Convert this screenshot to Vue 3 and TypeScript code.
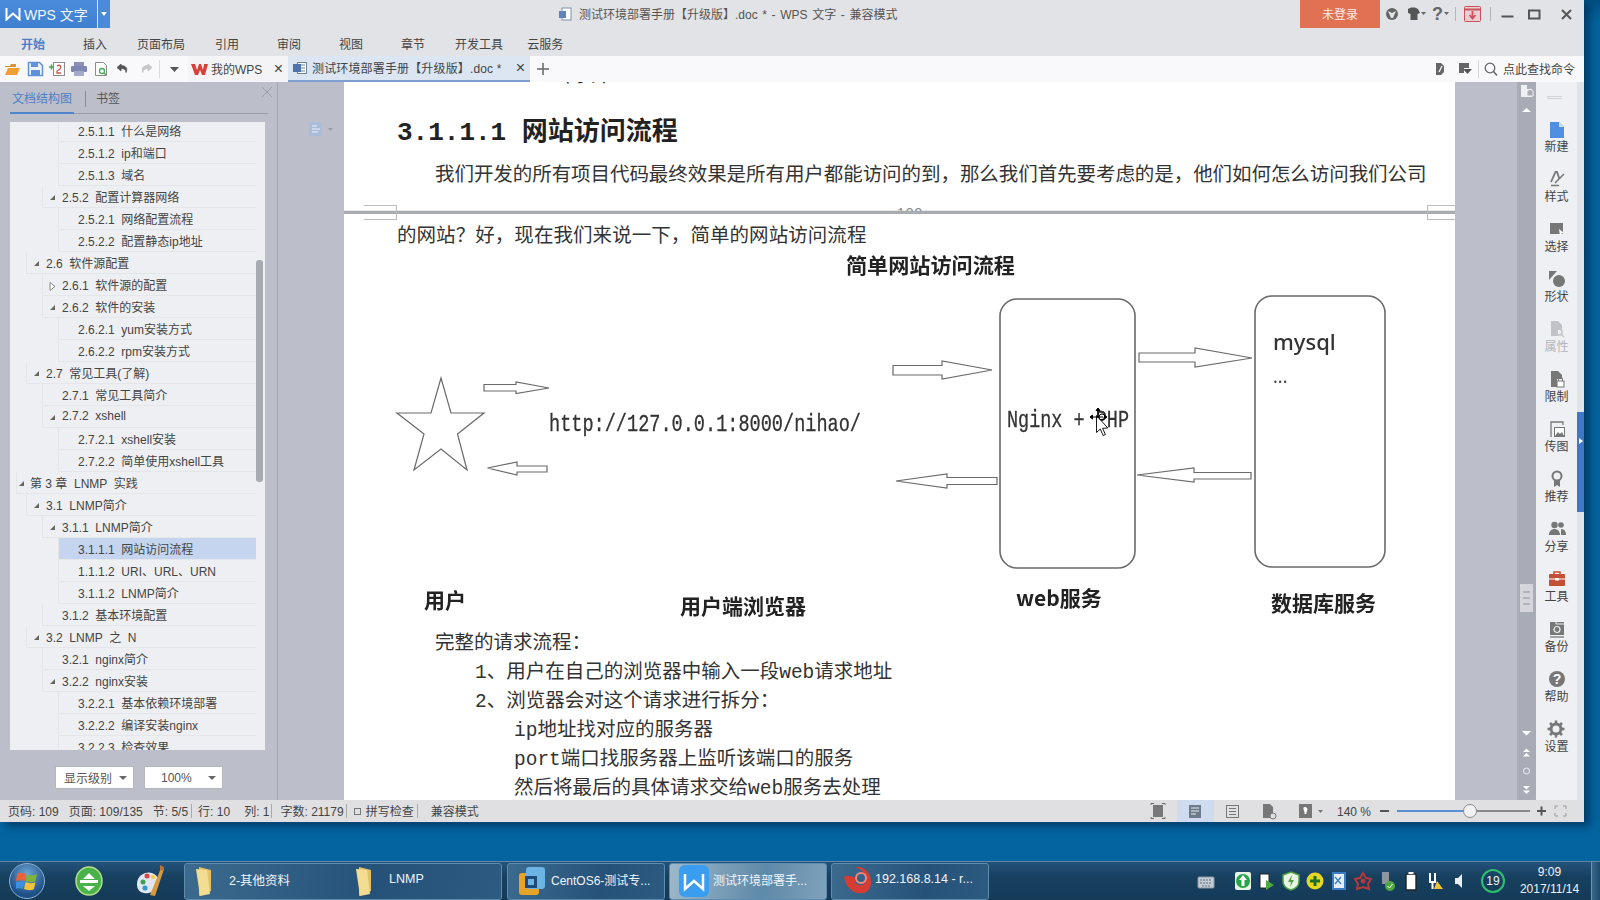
<script setup lang="ts">
interface Row { t: string; lv: number; a?: 'd' | 'r'; sel?: boolean }
const rows: Row[] = [
  { t: '2.5.1.1  什么是网络', lv: 4 },
  { t: '2.5.1.2  ip和端口', lv: 4 },
  { t: '2.5.1.3  域名', lv: 4 },
  { t: '2.5.2  配置计算器网络', lv: 3, a: 'd' },
  { t: '2.5.2.1  网络配置流程', lv: 4 },
  { t: '2.5.2.2  配置静态ip地址', lv: 4 },
  { t: '2.6  软件源配置', lv: 2, a: 'd' },
  { t: '2.6.1  软件源的配置', lv: 3, a: 'r' },
  { t: '2.6.2  软件的安装', lv: 3, a: 'd' },
  { t: '2.6.2.1  yum安装方式', lv: 4 },
  { t: '2.6.2.2  rpm安装方式', lv: 4 },
  { t: '2.7  常见工具(了解)', lv: 2, a: 'd' },
  { t: '2.7.1  常见工具简介', lv: 3 },
  { t: '2.7.2  xshell', lv: 3, a: 'd' },
  { t: '2.7.2.1  xshell安装', lv: 4 },
  { t: '2.7.2.2  简单使用xshell工具', lv: 4 },
  { t: '第 3 章  LNMP  实践', lv: 1, a: 'd' },
  { t: '3.1  LNMP简介', lv: 2, a: 'd' },
  { t: '3.1.1  LNMP简介', lv: 3, a: 'd' },
  { t: '3.1.1.1  网站访问流程', lv: 4, sel: true },
  { t: '1.1.1.2  URI、URL、URN', lv: 4 },
  { t: '3.1.1.2  LNMP简介', lv: 4 },
  { t: '3.1.2  基本环境配置', lv: 3 },
  { t: '3.2  LNMP  之  N', lv: 2, a: 'd' },
  { t: '3.2.1  nginx简介', lv: 3 },
  { t: '3.2.2  nginx安装', lv: 3, a: 'd' },
  { t: '3.2.2.1  基本依赖环境部署', lv: 4 },
  { t: '3.2.2.2  编译安装nginx', lv: 4 },
  { t: '3.2.2.3  检查效果', lv: 4 },
]
const ribbon = [
  { t: '开始', c: 'first' }, { t: '插入', c: '' }, { t: '页面布局', c: 'tight' }, { t: '引用', c: 'tight' },
  { t: '审阅', c: '' }, { t: '视图', c: '' }, { t: '章节', c: '' }, { t: '开发工具', c: 'tight' }, { t: '云服务', c: 'tighter' },
]
const tools = ['新建', '样式', '选择', '形状', '属性', '限制', '传图', '推荐', '分享', '工具', '备份', '帮助', '设置']
const trayBoxes = 10
</script>

<template>
  <div class="screen">
    <div class="window">
      <header class="titlebar">
        <div class="logo">
          <svg width="16" height="14" viewBox="0 0 16 14"><path d="M1.500 1v11.500L8 6.500l6.500 6V1" fill="none" stroke="#fff" stroke-width="2" /></svg>
          <span>WPS 文字</span>
        </div>
        <div class="logo-drop"><i></i></div>
        <svg class="title-ico" width="14" height="14" viewBox="0 0 14 14"><rect x="4" y="1" width="9" height="12" fill="#fff" stroke="#7f8fa8" /><rect x="1" y="4" width="7" height="7" fill="#5f83b8" /></svg>
        <div class="title-text">测试环境部署手册【升级版】.doc * - WPS 文字 - 兼容模式</div>
        <div class="login">未登录</div>
        <svg class="win-ctl" width="204" height="28" viewBox="1380 0 204 28">
          <circle cx="1392" cy="14" r="6" fill="#666" />
          <path d="M1388 11l4 2 4-2-3 7h-2z" fill="#e2e3e6" />
          <path d="M1408 9l3-1.500h4l3 1.500 2 4-2.500 1V20h-7v-6l-2.500-1z" fill="#555" />
          <path d="M1421 12h5l-2.500 3zM1444 12h5l-2.500 3z" fill="#666" />
          <text x="1432" y="19.500" class="q">?</text>
          <path d="M1455.500 7v14M1490.500 7v14" stroke="#b5b6ba" />
          <rect x="1464.500" y="6.500" width="16" height="15" rx="1" fill="#e9cfd2" stroke="#c9505f" />
          <path d="M1464 9.500h17" stroke="#c9505f" stroke-width="2" />
          <path d="M1472.500 11v7M1469.500 15l3 3.500 3-3.500" fill="none" stroke="#c9505f" stroke-width="1.800" />
          <path d="M1501.500 16.500h12" stroke="#555" stroke-width="2" />
          <rect x="1529" y="10.500" width="10.500" height="8" fill="none" stroke="#555" stroke-width="2" />
          <path d="M1562 10l9 9M1571 10l-9 9" stroke="#555" stroke-width="2" />
        </svg>
      </header>

      <nav class="ribbon">
        <span v-for="r in ribbon" :key="r.t" class="rtab" :class="r.c">{{ r.t }}</span>
      </nav>

      <div class="toolbar">
        <svg width="188" height="26" viewBox="0 0 188 26">
          <path d="M5 10h5l1-2h5v3H5z" fill="#d9932d" /><path d="M5 19l3-7h12l-3 7z" fill="#ee9f35" />
          <path d="M28.500 6.500h11l3 3v10h-14z" fill="#eef3fb" stroke="#5d92dc" stroke-width="1.500" /><rect x="31" y="7" width="7" height="4" fill="#5d92dc" /><rect x="31" y="14" width="9" height="5" fill="#5d92dc" />
          <rect x="53.500" y="6.500" width="11" height="13" fill="#fff" stroke="#8b8b8b" /><path d="M49 11h5M51.500 8.500v5" stroke="#4aa85a" stroke-width="1.600" /><path d="M57 10c3-2 5 1 3 3l-3 2v2h4" fill="none" stroke="#c9584f" stroke-width="1.300" />
          <rect x="74" y="6" width="10" height="4" fill="#8d90b8" /><rect x="71" y="10" width="16" height="6" rx="1" fill="#8086b4" /><rect x="74" y="15" width="10" height="5" fill="#a5a9cb" />
          <path d="M95.500 6.500h8l3 3v10h-11z" fill="#fff" stroke="#8b8b8b" /><circle cx="102" cy="15" r="2.500" fill="none" stroke="#4aa85a" stroke-width="1.300" /><path d="M104 17l2 2" stroke="#4aa85a" stroke-width="1.300" />
          <path d="M121 8l-4 3.500 4 3.500v-2.500c3 0 5 1 5 4 2-4 0-7-5-7z" fill="#555" stroke="#555" stroke-width=".8" />
          <path d="M148 8l4 3.500-4 3.500v-2.500c-3 0-5 1-5 4-2-4 0-7 5-7z" fill="#c4c5c8" stroke="#c4c5c8" stroke-width=".8" />
          <path d="M159.500 4v18" stroke="#dcdcdf" />
          <path d="M170 11h9l-4.500 5z" fill="#555" />
        </svg>
        <div class="dtab">
          <svg width="17" height="13" viewBox="0 0 17 13"><path d="M0 1h4l2 6 2-6h2l2 6 1-6h4l-3 11h-3L9 7l-2 5H4z" fill="#d8413a" /></svg>
          <span>我的WPS</span><b>×</b>
        </div>
        <div class="dtab active">
          <svg width="14" height="14" viewBox="0 0 14 14"><rect x="4.500" y="1.500" width="9" height="11" fill="#fff" stroke="#6c7f99" /><path d="M8 4h4M8 7h4M8 10h4" stroke="#6c7f99" /><rect x="0" y="3" width="8" height="8" fill="#4b74ad" /></svg>
          <span>测试环境部署手册【升级版】.doc *</span><b>×</b>
        </div>
        <svg class="plus" width="14" height="14" viewBox="0 0 14 14"><path d="M7 1v12M1 7h12" stroke="#666" stroke-width="1.500" /></svg>
        <div class="tool-right">
          <svg width="74" height="26" viewBox="1430 0 74 26">
            <path d="M1437 7h5l3 3v6l-3 3h-5z" fill="#666" /><path d="M1440 16l3-6" stroke="#f9f9fb" stroke-width="1.300" />
            <path d="M1460 7h10v5h-5v5h-5z" fill="#666" /><path d="M1464 13h9l-4.500 5z" fill="#555" />
            <path d="M1479.500 4v18" stroke="#d4d4d8" />
            <circle cx="1491" cy="12" r="4.800" fill="none" stroke="#666" stroke-width="1.300" /><path d="M1494.500 15.500l3.500 4" stroke="#666" stroke-width="1.500" />
          </svg>
          <span>点此查找命令</span>
        </div>
      </div>

      <main class="main">
        <aside class="sidebar">
          <div class="side-tabs">
            <span class="stab on">文档结构图</span><i class="ssep"></i><span class="stab">书签</span>
          </div>
          <svg class="side-x" width="10" height="10" viewBox="0 0 10 10"><path d="M0 0l10 10M10 0L0 10" stroke="#9a9da8" /></svg>
          <div class="tree">
            <div class="rows">
              <div v-for="r in rows" :key="r.t" class="row" :class="['lv' + r.lv, { sel: r.sel }]">
                <svg v-if="r.a === 'd'" class="arr" width="7" height="7" viewBox="0 0 7 7"><path d="M6 1v5H1z" fill="#666" /></svg>
                <svg v-else-if="r.a === 'r'" class="arr" width="7" height="9" viewBox="0 0 7 9"><path d="M1 .5l5 4-5 4z" fill="#fff" stroke="#888" /></svg>
                <span>{{ r.t }}</span>
              </div>
            </div>
            <div class="track"><div class="thumb"></div></div>
          </div>
          <div class="selects">
            <div class="sel-box"><span>显示级别</span><i></i></div>
            <div class="sel-box num"><span>100%</span><i></i></div>
          </div>
        </aside>

        <div class="gutter">
          <svg width="24" height="14" viewBox="0 0 24 14"><rect x="0" y="0" width="13" height="14" fill="#a9bcd9" /><path d="M3 4h5M3 7h8M3 10h6" stroke="#eef2f8" /><path d="M19 6h5l-2.500 3z" fill="#9a9da8" /></svg>
        </div>

        <section class="doc">
          <div class="page-a">
            <div class="frag">简介</div>
            <h3 class="h"><span class="hn">3.1.1.1 </span>网站访问流程</h3>
            <p class="line ind first-line">我们开发的所有项目代码最终效果是所有用户都能访问的到，那么我们首先要考虑的是，他们如何怎么访问我们公司</p>
            <span class="pno">109</span>
          </div>
          <div class="break"></div>
          <i class="mark left"></i><i class="mark right"></i>
          <div class="page-b">
            <p class="line second-line">的网站？好，现在我们来说一下，简单的网站访问流程</p>
            <svg class="diagram" width="1111" height="378" viewBox="344 247 1111 378">
              <g fill="#fff" stroke="#6a6a6a" stroke-width="1.200" transform="translate(0 -1)">
                <path d="M441 378L451 413H484L457.500 434L467 470L441 449L414 470L424 434L397 413H431Z" />
                <rect x="1000" y="299" width="135" height="269" rx="17" stroke-width="1.600" />
                <rect x="1255" y="296" width="130" height="271" rx="17" stroke-width="1.600" />
                <path d="M484 384.500H516V382L549 388L516 393.500V391H484Z" />
                <path d="M487.500 468L517 462V466H547V472H517V475Z" />
                <path d="M893 365.500H942V361L992 370L942 379V375H893Z" />
                <path d="M896 481L947 474V477.500H997V484.500H947V488Z" />
                <path d="M1139 353H1195V348L1252 358L1195 367V362H1139Z" />
                <path d="M1137 475L1194 468V472.500H1251V479H1194V482Z" />
              </g>
              <g class="shot">
                <text x="846" y="272" class="cap" textLength="169" lengthAdjust="spacingAndGlyphs">简单网站访问流程</text>
                <text x="549" y="430" class="mono" textLength="312" lengthAdjust="spacingAndGlyphs">http://127.0.0.1:8000/nihao/</text>
                <text x="1007" y="426" class="mono" textLength="122" lengthAdjust="spacingAndGlyphs">Nginx + PHP</text>
                <text x="1273" y="349" class="my">mysql</text>
                <text x="1273" y="382" class="dots">...</text>
                <text x="424" y="607" class="cap">用户</text>
                <text x="680" y="613" class="cap">用户端浏览器</text>
                <text x="1016" y="605" class="cap">web服务</text>
                <text x="1271" y="610" class="cap">数据库服务</text>
              </g>
              <path d="M1096.500 414.500l0 17 3.800-3.500 2.800 6.500 2.300-1-2.800-6.200 5.200-.3z" fill="#fff" stroke="#000" stroke-width=".9" />
              <path d="M1098 407v10M1090 416h13M1098 407l-2 2.500h4zM1090 416l2.500-2v4zM1107 416l-2.500-2v4z" stroke="#000" fill="#000" stroke-width="1" />
              <circle cx="1102" cy="416" r="3" fill="none" stroke="#000" />
            </svg>
            <p class="line ind">完整的请求流程：</p>
            <p class="line ind2"><span class="la">1</span>、用户在自己的浏览器中输入一段<span class="la">web</span>请求地址</p>
            <p class="line ind2"><span class="la">2</span>、浏览器会对这个请求进行拆分：</p>
            <p class="line ind3"><span class="la">ip</span>地址找对应的服务器</p>
            <p class="line ind3"><span class="la">port</span>端口找服务器上监听该端口的服务</p>
            <p class="line ind3">然后将最后的具体请求交给<span class="la">web</span>服务去处理</p>
          </div>
        </section>

        <div class="gutter-r"></div>

        <svg class="vscroll" width="19" height="718" viewBox="1517 82 19 718">
          <rect x="1517" y="82" width="19" height="718" fill="#a9abb7" />
          <path d="M1521 85h6v4h5v8h-11z" fill="#eef0f3" /><path d="M1527 91l3-2 3 2v5h-6z" fill="#a9abb7" stroke="#eef0f3" />
          <path d="M1522 112l4.500-4 4.500 4z" fill="#fff" />
          <rect x="1520" y="584" width="13" height="28" fill="#d5d6dc" />
          <path d="M1523 592h7M1523 598h7M1523 604h7" stroke="#8d8f9a" />
          <path d="M1522 731h9l-4.500 4.500z" fill="#fff" />
          <path d="M1523 752l3.500-3.500 3.500 3.500zM1523 756.500l3.500-3.500 3.500 3.500z" fill="#fff" />
          <circle cx="1526.500" cy="771" r="3" fill="none" stroke="#eef0f3" />
          <path d="M1523 786l3.500 3.500 3.500-3.500zM1523 790.500l3.500 3.500 3.500-3.500z" fill="#fff" />
        </svg>

        <aside class="tools">
          <i class="grip"></i>
          <div v-for="(t, i) in tools" :key="t" class="tool" :class="{ dim: t === '属性' }">
            <svg width="20" height="20" viewBox="0 0 20 20">
              <path v-if="i === 0" d="M3 3h9l5 5v11H3z" fill="#4f8ee0" />
              <path v-if="i === 0" d="M12 3v5h5" fill="#cfe0f6" />
              <g v-if="i === 1"><path d="M4 13L8.500 3h1.500l2.500 7" fill="none" stroke="#777" stroke-width="1.800" /><path d="M17 5L8 14M4 16.500h8" stroke="#777" stroke-width="1.500" /></g>
              <g v-if="i === 2"><rect x="3" y="4" width="13" height="11" fill="#777" /><path d="M12 10l5 4-2.500.5L13 17z" fill="#fff" /></g>
              <g v-if="i === 3"><path d="M2 2h8L2 11z" fill="#777" /><circle cx="12" cy="12" r="6" fill="#777" /></g>
              <g v-if="i === 4"><path d="M4 2h7l4 4v5h-4v6H4z" fill="#c2c3c8" /><circle cx="12" cy="13" r="3" fill="none" stroke="#c2c3c8" stroke-width="1.500" /><path d="M14 15l3 3" stroke="#c2c3c8" stroke-width="1.500" /></g>
              <g v-if="i === 5"><path d="M4 2h7l4 4v4h-5v8H4z" fill="#777" /><rect x="10" y="12" width="7" height="6" fill="#fff" stroke="#777" /><path d="M11.500 12V10a2 2 0 0 1 4 0v2" fill="none" stroke="#777" /></g>
              <g v-if="i === 6"><path d="M4 18V3h12v3" fill="none" stroke="#777" stroke-width="1.300" /><rect x="7.500" y="8.500" width="10" height="9" fill="#fff" stroke="#777" /><path d="M8 17l3-4 2 2 2-2 2 4z" fill="#777" /></g>
              <g v-if="i === 7"><circle cx="10" cy="7" r="4.500" fill="none" stroke="#777" stroke-width="2" /><path d="M7 11v7l3-2 3 2v-7" fill="#777" /></g>
              <g v-if="i === 8"><circle cx="7.500" cy="6" r="3.200" fill="#777" /><circle cx="14" cy="6" r="2.800" fill="#777" /><path d="M2 16c0-8 11-8 11 0zM14 10c4 0 5 3 5 6h-5z" fill="#777" /></g>
              <g v-if="i === 9"><path d="M7 5V3h6v2" fill="none" stroke="#c35036" stroke-width="1.500" /><rect x="2" y="5" width="16" height="12" rx="1" fill="#c35036" /><path d="M2 10h16" stroke="#fff" /><rect x="8" y="9" width="4" height="2.500" fill="#fff" /></g>
              <g v-if="i === 10"><path d="M3 3h14v13H3z" fill="#777" /><path d="M9 3v2h8" fill="none" stroke="#eff0f3" /><path d="M3 18h14" stroke="#777" stroke-width="1.300" /><circle cx="10" cy="10.500" r="3" fill="none" stroke="#eff0f3" stroke-width="1.200" /></g>
              <g v-if="i === 11"><circle cx="10" cy="10" r="8" fill="#777" /><text x="10" y="15" class="qh">?</text></g>
              <g v-if="i === 12"><circle cx="9" cy="10" r="5" fill="none" stroke="#777" stroke-width="3" /><path d="M9 1.500v3M9 15.500v3M.5 10h3M14.500 10h3M3 4l2 2M13 14l2 2M15 4l-2 2M5 14l-2 2" stroke="#777" stroke-width="2.500" /></g>
            </svg>
            <span>{{ t }}</span>
          </div>
        </aside>

        <div class="edge">
          <div class="edge-tab"><i></i></div>
        </div>
      </main>

      <footer class="status">
        <span>页码: 109</span><span>页面: 109/135</span><span class="m">节: 5/5</span><i class="bar"></i>
        <span class="n">行: 10</span><span class="n2">列: 1</span><i class="bar"></i>
        <span class="n5">字数: 21179</span><i class="bar"></i><i class="check"></i>
        <span class="n3">拼写检查</span><i class="bar"></i><span class="n4">兼容模式</span>
        <svg class="st-right" width="444" height="22" viewBox="1140 0 444 22">
          <path d="M1151 5v-1.500h3M1165 5v-1.500h-3M1151 17v1.500h3M1165 17v1.500h-3" fill="none" stroke="#666" /><rect x="1153" y="5" width="10" height="12" fill="#777" />
          <rect x="1177" y="0" width="37" height="22" fill="#cfdcef" />
          <rect x="1189" y="5" width="12" height="13" fill="#6f7b88" /><path d="M1191 8h8M1191 11h8M1191 14h5" stroke="#e7edf5" />
          <rect x="1226.500" y="5.500" width="12" height="12" fill="none" stroke="#777" /><path d="M1229 8.500h7M1229 11.500h7M1229 14.500h7" stroke="#777" />
          <path d="M1263 4h7l3 3v11h-10z" fill="#777" /><circle cx="1273" cy="16" r="3" fill="#e0e0e3" stroke="#777" />
          <rect x="1299" y="4" width="13" height="14" fill="#777" /><path d="M1303.500 7.500a2.500 2.500 0 0 1 4 2l-1 2.500v2h-2v-2l-1-2.500z" fill="#fff" />
          <path d="M1318 10h5l-2.500 3z" fill="#777" />
          <text x="1337" y="15.500" class="st-txt">140 %</text>
          <path d="M1380 11h9" stroke="#555" stroke-width="2" />
          <path d="M1397 11h68" stroke="#5b8fd4" stroke-width="2" />
          <path d="M1477 11h53" stroke="#8a8a8a" stroke-width="2" />
          <circle cx="1470" cy="11" r="6.500" fill="#f2f2f4" stroke="#8a8a8a" />
          <path d="M1537 11h9M1541.500 6.500v9" stroke="#555" stroke-width="2" />
          <path d="M1555 9V6h3M1563 6h3v3M1555 13v3h3M1563 16h3v-3" fill="none" stroke="#999" />
        </svg>
      </footer>
    </div>

    <div class="taskbar">
      <div class="orb">
        <svg width="22" height="22" viewBox="0 0 22 22">
          <path d="M1 4c3-2 6-1 9 0l-1.500 7c-3-1-6-1-8.500 0z" fill="#e8633a" /><path d="M11 4c3 1 6 2 10 0l-1.500 7c-3 2-7 1-10 0z" fill="#7cb43c" />
          <path d="M0 12c3-1 5-1 8.500 0L7 19c-3-1-5-1-8 0z" fill="#3d8fe0" /><path d="M9.500 12c3 1 7 2 10 0L18 19c-3 2-7 1-10 0z" fill="#f2c23c" />
        </svg>
      </div>
      <svg class="ie" width="28" height="32" viewBox="0 0 28 32">
        <ellipse cx="14" cy="16" rx="13" ry="14" fill="#49b24a" /><ellipse cx="14" cy="16" rx="13" ry="14" fill="none" stroke="#b5e08a" stroke-width="1.500" />
        <path d="M5 15h18v3H5z" fill="#fff" /><path d="M14 8l6 6H8zM14 26l-6-5h12z" fill="#fff" />
      </svg>
      <svg class="paint" width="30" height="34" viewBox="0 0 30 34">
        <path d="M2 20c0-9 9-13 15-11 6 2 7 7 5 12-2 7-8 9-13 8-5-1-7-4-7-9z" fill="#dfe6ee" />
        <circle cx="8" cy="18" r="2.500" fill="#3f9f4f" /><circle cx="12" cy="12" r="2.500" fill="#d44" /><circle cx="10" cy="24" r="2.500" fill="#39c" /><circle cx="18" cy="13" r="2" fill="#fc3" />
        <path d="M15 31L26 4l3 1-9 27z" fill="#d99a3d" /><path d="M25 1l4 2-1 4-3-1z" fill="#b5763a" />
      </svg>
      <div class="tb group">
        <div class="tb-item first">
          <svg width="20" height="32" viewBox="0 0 20 32"><path d="M4 2l12 3v21L4 31z" fill="#e4c165" /><path d="M1 4l11 1 3 24-10 2z" fill="#f3dd92" /></svg>
          <span>2-其他资料</span>
        </div>
        <div class="tb-item second">
          <svg width="20" height="32" viewBox="0 0 20 32"><path d="M4 2l12 3v21L4 31z" fill="#e4c165" /><path d="M1 4l11 1 3 24-10 2z" fill="#f3dd92" /></svg>
          <span>LNMP</span>
        </div>
      </div>
      <div class="tb single vm">
        <svg width="28" height="32" viewBox="0 0 28 32">
          <rect x="1" y="8" width="20" height="22" rx="3" fill="#e7a427" /><rect x="8" y="2" width="19" height="22" rx="3" fill="#6cb4e4" />
          <rect x="7" y="11" width="12" height="12" fill="#1e4a76" /><rect x="10" y="14" width="6" height="6" fill="#6cb4e4" />
        </svg>
        <span>CentOS6-测试专...</span>
      </div>
      <div class="tb single active">
        <svg width="30" height="32" viewBox="0 0 30 32"><rect x="0" y="0" width="30" height="32" rx="6" fill="#3a9df0" /><path d="M6 9v15l9-8 9 8V9" fill="none" stroke="#fff" stroke-width="2.500" /></svg>
        <span>测试环境部署手...</span>
      </div>
      <div class="tb single xs">
        <svg width="32" height="32" viewBox="0 0 32 32">
          <path d="M3 12c2 11 10 18 20 16 6-2 9-9 6-17-3-7-10-11-15-8 5 0 10 4 11 10 0 5-3 8-7 7-4-1-5-5-3-8-5 0-8-3-12 0z" fill="#d53c33" />
          <circle cx="20" cy="13" r="5" fill="none" stroke="#f08a7f" stroke-width="2" />
        </svg>
        <span>192.168.8.14 - r...</span>
      </div>
      <div class="tray">
        <svg class="kb" width="24" height="22" viewBox="0 0 24 22"><rect x="4" y="7" width="16" height="11" rx="1" fill="#c4ccd4" stroke="#8a98a6" /><path d="M6 10h12M6 13h12M8 16h8" stroke="#5f6e7d" stroke-dasharray="2 1" /></svg>
        <div v-for="n in trayBoxes" :key="n" class="ti">
          <svg width="22" height="22" viewBox="0 0 22 22">
            <g v-if="n === 1"><rect x="3" y="2" width="16" height="18" rx="2" fill="#e9f3ea" /><circle cx="11" cy="11" r="7" fill="#27a348" /><path d="M11 5l4 5h-2.500v6h-3v-6H7z" fill="#fff" /></g>
            <g v-if="n === 2"><rect x="4" y="4" width="9" height="14" fill="#fff" stroke="#222" /><path d="M10 10l8 5-8 5z" fill="#4fa83e" /></g>
            <g v-if="n === 3"><path d="M11 2l8 3v6c0 5-4 8-8 9-4-1-8-4-8-9V5z" fill="#e8f3e4" stroke="#4f9f43" stroke-width="1.500" /><path d="M12 5l-4 7h3l-1 5 4-7h-3z" fill="#4f9f43" /></g>
            <g v-if="n === 4"><circle cx="11" cy="11" r="8.500" fill="#e6d822" /><path d="M11 6v10M6 11h10" stroke="#1d6d2b" stroke-width="3" /></g>
            <g v-if="n === 5"><rect x="4" y="2" width="14" height="18" fill="#3a7dc4" /><rect x="6" y="4" width="10" height="14" fill="#e5eef7" /><path d="M7 7l6 7M13 7l-6 7" stroke="#3a7dc4" stroke-width="1.300" /></g>
            <g v-if="n === 6"><path d="M11 3l3 5 5 1-3 5 1 5-6-2-6 2 1-5-3-5 5-1z" fill="none" stroke="#b33a3a" stroke-width="2" /><circle cx="11" cy="11" r="2.500" fill="#b33a3a" /></g>
            <g v-if="n === 7"><rect x="6" y="2" width="7" height="12" fill="#8d96a0" /><circle cx="14" cy="16" r="5" fill="#4fa83e" /><path d="M11.500 16l2 2 3-4" stroke="#fff" fill="none" /></g>
            <g v-if="n === 8"><rect x="6" y="4" width="10" height="16" rx="1" fill="#fff" stroke="#222" stroke-width="1.400" /><rect x="8.500" y="2" width="5" height="2" fill="#fff" /></g>
            <g v-if="n === 9"><path d="M6 3v9h5V3M8.500 12v7" stroke="#fff" fill="none" stroke-width="2" /><path d="M13 11l6 8h-9z" fill="#f2c23c" /></g>
            <g v-if="n === 10"><path d="M7 8h3l4-4v14l-4-4H7z" fill="#e8edf2" /></g>
          </svg>
        </div>
        <div class="net">19</div>
        <div class="clock"><div>9:09</div><div>2017/11/14</div></div>
        <div class="show"></div>
      </div>
    </div>
  </div>
</template>

<style>
html, body { margin: 0; padding: 0; background: #005f9c; }
</style>

<style scoped>
* { box-sizing: border-box; }
.screen {
  width: 1600px; height: 900px; overflow: hidden; display: flex; flex-direction: column;
  background: linear-gradient(#014f82 0, #04649f 22px, #04649f 100%);
  font-family: "Liberation Sans", "Noto Sans CJK SC", sans-serif; font-size: 12px; color: #444;
}
.window { width: 1584px; height: 822px; flex: none; display: flex; flex-direction: column; background: #e2e3e6; box-shadow: 6px 4px 8px rgba(0, 30, 60, .55); position: relative; }
.titlebar { height: 28px; flex: none; display: flex; align-items: center; }
.logo { width: 97px; height: 28px; background: linear-gradient(#4b8cdc, #3f7fcf); color: #f2f6fc; display: flex; align-items: center; padding-left: 5px; gap: 3px; font-size: 14px; }
.logo-drop { width: 12px; height: 28px; margin-left: 1px; background: #4a8ad8; display: flex; align-items: center; justify-content: center; }
.logo-drop i { border: 3px solid transparent; border-top: 4px solid #fff; border-bottom: 0; }
.title-ico { margin-left: 448px; }
.title-text { margin-left: 7px; color: #555; white-space: nowrap; word-spacing: 1.300px; padding-bottom: 2px; }
.login { margin-left: auto; width: 80px; height: 28px; background: #e07153; color: #fdeee8; display: flex; align-items: center; justify-content: center; padding-bottom: 2px; }
.q { font: bold 18px "Liberation Sans", sans-serif; fill: #666; }
.ribbon { height: 28px; flex: none; display: flex; align-items: center; padding-left: 21px; padding-top: 2px; color: #444; }
.rtab { margin-left: 38px; white-space: nowrap; }
.rtab.first { margin-left: 0; color: #4d7fc6; font-weight: bold; }
.rtab.tight { margin-left: 30px; }
.rtab.tighter { margin-left: 24px; }
.toolbar { height: 26px; flex: none; display: flex; align-items: center; background: #f9f9fb; }
.dtab { height: 26px; display: flex; align-items: center; white-space: nowrap; }
.dtab span { padding-bottom: 2px; }
.dtab:not(.active) { width: 100px; background: #f4f4f6; padding-left: 3px; gap: 3px; }
.dtab.active { width: 242px; background: #dce6f3; border-bottom: 2px solid #7f9fd0; padding-left: 5px; gap: 5px; }
.dtab.active span { letter-spacing: .15px; }
.dtab b { font-weight: normal; font-size: 16px; color: #444; margin-left: auto; margin-right: 5px; }
.plus { margin-left: 6px; }
.tool-right { margin-left: auto; display: flex; align-items: center; padding-right: 9px; }
.tool-right span { padding-bottom: 2px; }
.main { height: 718px; flex: none; display: flex; background: #bcbfca; overflow: hidden; }
.sidebar { width: 278px; flex: none; border-right: 1px solid #a2a5b0; position: relative; display: flex; flex-direction: column; padding-left: 10px; }
.side-tabs { width: 258px; height: 32px; flex: none; display: flex; align-items: flex-start; border-bottom: 1px solid #9a9da8; padding-top: 8px; position: relative; }
.stab { color: #555; line-height: 18px; }
.stab.on { color: #4d7fc6; width: 64px; padding-left: 2px; height: 24px; border-bottom: 2px solid #4d84cc; margin-bottom: -1px; }
.ssep { width: 1px; height: 16px; background: #8a8d98; margin: 1px 10px 0 11px; }
.side-x { position: absolute; left: 262px; top: 5px; }
.tree { width: 255px; height: 628px; margin-top: 8px; flex: none; background: #eeeff2; display: flex; overflow: hidden; }
.rows { width: 246px; flex: none; margin-top: -2px; }
.row { height: 22px; display: flex; align-items: center; border-bottom: 1px solid #e5e6e9; border-left: 1px solid #e5e6e9; white-space: pre; color: #444; position: relative; padding-bottom: 1px; }
.lv1 { margin-left: 6px; padding-left: 13px; }
.lv2 { margin-left: 16px; padding-left: 19px; }
.lv3 { margin-left: 32px; padding-left: 19px; }
.lv4 { margin-left: 48px; padding-left: 19px; }
.row.sel { background: #c5d5ef; }
.arr { position: absolute; left: 6px; top: 8px; }
.lv1 .arr { left: 1px; }
.track { width: 9px; flex: none; padding: 138px 0 0 0; }
.thumb { width: 7px; height: 222px; background: #a9abb3; border-radius: 3px; }
.selects { display: flex; gap: 10px; padding-left: 45px; margin-top: 16px; }
.sel-box { width: 79px; height: 23px; background: #fff; border: 1px solid #b5b7c0; display: flex; align-items: center; padding: 0 6px 0 8px; color: #555; justify-content: space-between; }
.sel-box.num { padding-left: 16px; }
.sel-box i { border: 4px solid transparent; border-top: 4px solid #666; border-bottom: 0; }
.gutter { width: 66px; flex: none; padding: 40px 0 0 31px; }
.doc { width: 1111px; flex: none; background: #fff; position: relative; overflow: hidden; }
.page-a { height: 129px; padding-left: 53px; position: relative; overflow: hidden; }
.frag { font-size: 19.500px; line-height: 20px; margin: -17px 0 0 168px; color: #222; height: 20px; letter-spacing: 6px; }
.h { margin: 0; height: 61px; padding-top: 27px; font-size: 26px; line-height: 34px; font-weight: bold; color: #222; white-space: pre; font-family: "Noto Sans CJK SC", sans-serif; }
.hn { font-family: "Liberation Mono", monospace; white-space: pre; }
.line { margin: 0; font-size: 19.500px; line-height: 29px; height: 29px; color: #333; white-space: nowrap; font-family: "Noto Sans CJK SC", sans-serif; }
.first-line { letter-spacing: -.06px; }
.second-line { letter-spacing: .06px; }
.la { font-family: "Liberation Mono", monospace; }
.ind { margin-left: 38px; margin-top: 12px; }
.page-b .ind { margin-left: 91px; margin-top: 0; }
.ind2 { margin-left: 131px; }
.ind3 { margin-left: 170px; }
.pno { position: absolute; left: 553px; top: 123px; font-size: 14px; color: #888; letter-spacing: 1px; }
.break { height: 3px; background: #a9abb3; box-shadow: 0 -1px 1px rgba(0, 0, 0, .1); }
.mark { position: absolute; top: 123px; height: 15px; border: 1px solid #bbb; }
.mark.left { left: 20px; width: 33px; border-left: 0; }
.mark.right { right: 0; width: 28px; border-right: 0; }
.page-b { padding-top: 5px; }
.page-b > .line:first-child { margin-left: 53px; }
.diagram { display: block; }
.shot { filter: blur(.35px); }
.cap { font: bold 21px "Noto Sans CJK SC", sans-serif; fill: #222; }
.mono { font: 24px "Liberation Mono", monospace; fill: #333; stroke: #333; stroke-width: .3px; }
.my { font: 500 22px "Noto Sans", sans-serif; fill: #333; }
.dots { font: 18px "Noto Sans", sans-serif; fill: #444; }
.gutter-r { width: 62px; flex: none; }
.vscroll { flex: none; display: block; }
.tools { width: 41px; flex: none; background: #eff0f3; padding-top: 37px; position: relative; }
.grip { position: absolute; left: 11px; top: 14px; width: 15px; height: 3px; border-top: 1px solid #d2d3d8; border-bottom: 1px solid #d2d3d8; }
.tool { height: 50px; display: flex; flex-direction: column; align-items: center; }
.tool svg { display: block; flex: none; }
.tool span { line-height: 17px; color: #444; }
.tool.dim span { color: #b3b4b9; }
.qh { font: bold 14px "Liberation Sans", sans-serif; fill: #fff; text-anchor: middle; }
.edge { width: 7px; flex: none; background: #e2e3e6; padding-top: 330px; }
.edge-tab { height: 100px; background: #3f78c8; padding-top: 26px; }
.edge-tab i { display: block; border: 3px solid transparent; border-left: 4px solid #fff; border-right: 0; width: 0; margin-left: 2px; }
.status { height: 22px; flex: none; display: flex; align-items: center; padding-left: 8px; background: #e0e0e3; color: #444; position: relative; white-space: nowrap; }
.status span { margin-right: 10px; padding-bottom: 1px; }
.status .m { margin-right: 3px; }
.status .n { margin-left: 3px; margin-right: 14px; }
.status .n2 { margin-right: 2px; }
.status .n5 { margin-left: 5px; margin-right: 2px; }
.status .n3 { margin-right: 3px; }
.status .n4 { margin-left: 10px; }
.bar { width: 1px; height: 14px; background: #aaa; margin-right: 3px; }
.check { width: 7px; height: 7px; border: 1px solid #777; margin: 0 5px 0 4px; }
.st-right { position: absolute; left: 1140px; top: 0; }
.st-txt { font: 12px "Liberation Sans", sans-serif; fill: #444; }
.taskbar { margin-top: 39px; height: 39px; flex: none; display: flex; align-items: center; background: linear-gradient(#23527a, #17405f 40%, #143a58); border-top: 1px solid #5c87a8; padding-left: 9px; color: #f0f4f8; font-size: 12.500px; white-space: nowrap; }
.orb { width: 36px; height: 36px; border-radius: 50%; background: radial-gradient(circle at 50% 30%, #6fa6d6, #1c4f86 70%); border: 1px solid #8eb4d4; display: flex; align-items: center; justify-content: center; flex: none; }
.ie { margin-left: 30px; flex: none; }
.paint { margin-left: 32px; flex: none; }
.tb { height: 37px; border: 1px solid #5e8cae; border-radius: 3px; background: linear-gradient(100deg, #3c6a8e, #26527a 60%, #2c5a80); display: flex; align-items: center; flex: none; }
.tb span { padding-bottom: 4px; }
.group { width: 318px; margin-left: 19px; }
.tb-item { display: flex; align-items: center; height: 100%; }
.tb-item.first { width: 159px; padding-left: 10px; gap: 14px; border-right: 1px solid #2a5578; }
.tb-item.second { padding-left: 11px; gap: 14px; }
.single { width: 158px; margin-left: 4px; }
.vm { padding-left: 10px; gap: 5px; margin-left: 5px; font-size: 12px; }
.active { background: linear-gradient(100deg, #9db8cb, #5e89a8 60%, #7fa2bb); padding-left: 9px; gap: 4px; font-size: 12px; }
.xs { padding-left: 9px; gap: 2px; }
.tray { flex: 1; display: flex; align-items: center; padding-left: 205px; height: 100%; }
.kb { margin-right: 13px; flex: none; }
.ti { width: 24px; display: flex; justify-content: center; flex: none; }
.net { width: 24px; height: 24px; border-radius: 50%; border: 2px solid #2fc06e; margin-left: 10px; display: flex; align-items: center; justify-content: center; font-size: 12px; flex: none; }
.clock { width: 83px; text-align: center; line-height: 17px; font-size: 12px; flex: none; margin-left: 3px; }
.show { flex: 1; height: 100%; background: linear-gradient(90deg, #3b6585, #1d4b6e); border-left: 1px solid #6f94ae; }
</style>
